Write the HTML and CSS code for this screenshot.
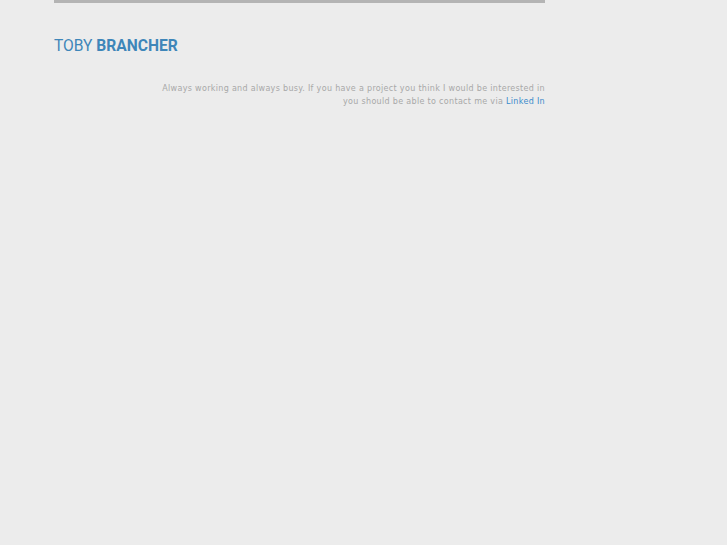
FILE: index.html
```html
<!DOCTYPE html>
<html lang="en">
<head>
    <meta charset="UTF-8">
    <meta name="viewport" content="width=device-width, initial-scale=1.0">
    <title>Toby Brancher</title>
    <link rel="stylesheet" href="styles.css">
</head>
<body>
    <div class="page">
        <div class="topline"></div>
        <header class="brand">
            <span class="first">TOBY</span> <span class="last">BRANCHER</span>
        </header>
        <p class="about">
            Always working and always busy. If you have a project you think I would be interested in<br>
            you should be able to contact me via <a href="#">Linked In</a>
        </p>
    </div>
</body>
</html>
```
FILE: styles.css
```css
body {
    margin: 0;
    background-color: #ececec;
}
.page {
    width: 491px;
    margin-left: 54px;
}
.topline {
    height: 3px;
    background-color: #b4b4b4;
}
.brand {
    margin-top: 33px;
    font-family: Roboto, 'Liberation Sans', sans-serif;
    font-size: 15.6px;
    line-height: 20px;
    color: #3e86b9;
}
.brand .first {
    font-weight: normal;
}
.brand .last {
    font-weight: bold;
}
.about {
    margin: 26px 0 0;
    text-align: right;
    font-family: 'DejaVu Sans', sans-serif;
    font-size: 8px;
    line-height: 13px;
    color: #a8a8a8;
    letter-spacing: 0.32px;
}
.about a {
    color: #3a8bcb;
    text-decoration: none;
}
```
